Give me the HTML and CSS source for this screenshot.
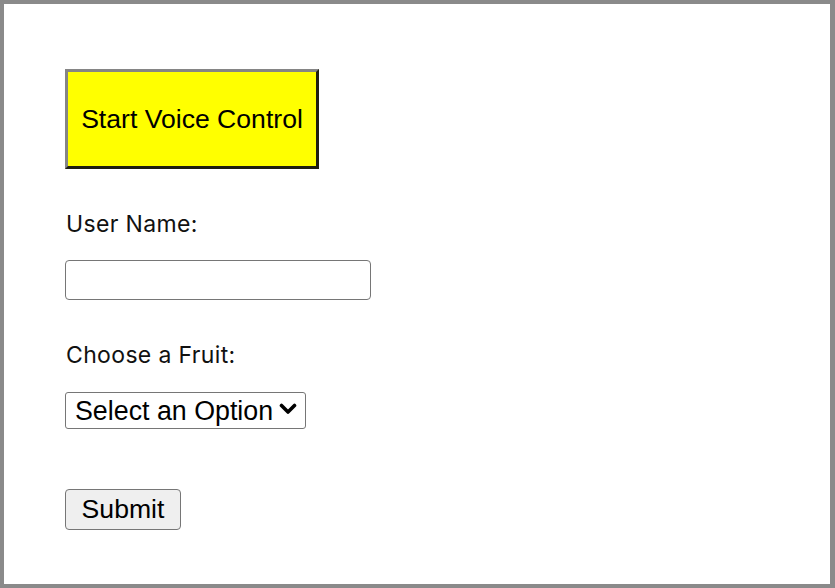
FILE: index.html
```html
<!DOCTYPE html>
<html>
<head>
<meta charset="utf-8">
<link rel="stylesheet" href="styles.css">
</head>
<body>
<div class="frame">
  <form class="form">
    <button type="button" class="voice-btn">Start Voice Control</button>
    <label class="label" for="user">User Name:</label>
    <input id="user" class="text-input" type="text">
    <label class="label label-fruit" for="fruit">Choose a Fruit:</label>
    <span class="select-wrap">
      <select id="fruit" class="select">
        <option>Select an Option</option>
      </select>
      <svg class="chevron" width="18" height="12" viewBox="0 0 18 12"><path d="M2.5 2.5 L9 9 L15.5 2.5" fill="none" stroke="#000" stroke-width="3.6" stroke-linecap="round" stroke-linejoin="round"/></svg>
    </span>
    <button type="button" class="submit-btn">Submit</button>
  </form>
</div>
</body>
</html>
```
FILE: styles.css
```css
html, body {
  margin: 0;
  padding: 0;
  background: #ffffff;
}
.frame {
  box-sizing: border-box;
  width: 835px;
  height: 588px;
  border: 4px solid #8a8a8a;
  border-right-width: 5px;
  padding: 65px 0 0 61px;
}
.form {
  display: flex;
  flex-direction: column;
  align-items: flex-start;
}
.voice-btn {
  box-sizing: border-box;
  width: 254px;
  height: 100px;
  background: #ffff00;
  border: 3px solid;
  border-color: #858585 #1e1e10 #1e1e10 #858585;
  font-family: "Liberation Sans", Arial, sans-serif;
  font-size: 26.6px;
  color: #000;
  padding: 0;
}
.label {
  font-family: Inter, "Noto Sans", sans-serif;
  font-size: 23px;
  line-height: 28px;
  letter-spacing: 0.35px;
  color: #111;
  margin-top: 41px;
  margin-left: 1px;
}
.label-fruit {
  margin-top: 41px;
}
.text-input {
  box-sizing: border-box;
  width: 306px;
  height: 40px;
  margin-top: 22px;
  border: 1.5px solid #767676;
  border-radius: 4px;
  background: #fff;
}
.select-wrap {
  position: relative;
  display: inline-block;
  margin-top: 23px;
}
.select {
  display: block;
  box-sizing: border-box;
  appearance: none;
  -webkit-appearance: none;
  width: 241px;
  height: 37px;
  border: 1.5px solid #767676;
  border-radius: 3px;
  background: #fff;
  font-family: "Liberation Sans", Arial, sans-serif;
  font-size: 26.8px;
  color: #000;
  padding: 0 0 0 9px;
}
.chevron {
  position: absolute;
  left: 214px;
  top: 11px;
  pointer-events: none;
}
.submit-btn {
  box-sizing: border-box;
  width: 116px;
  height: 41px;
  margin-top: 60px;
  background: #efefef;
  border: 1.5px solid #767676;
  border-radius: 4px;
  font-family: "Liberation Sans", Arial, sans-serif;
  font-size: 26.6px;
  color: #000;
  padding: 0;
}
```
